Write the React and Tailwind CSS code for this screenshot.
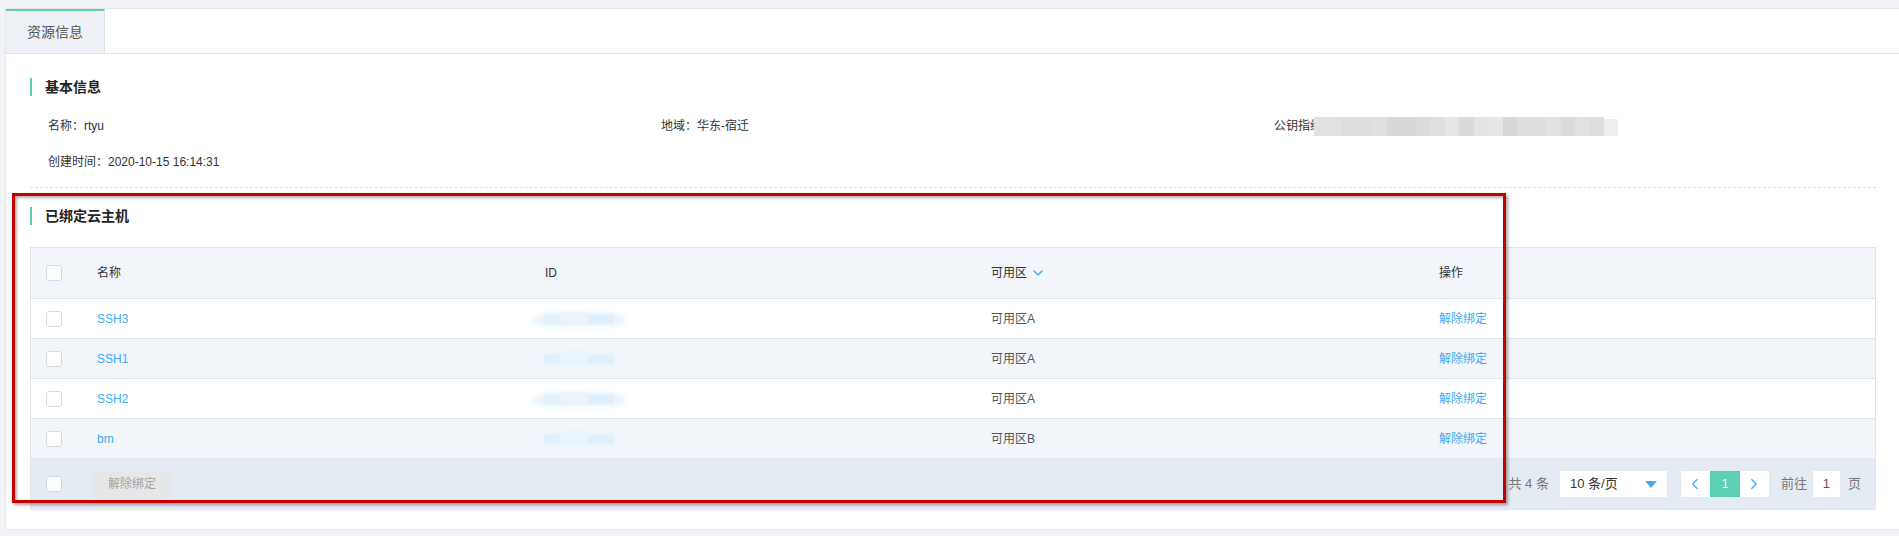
import { ChevronDown, ChevronLeft, ChevronRight } from "lucide-react";

const font = "font-['Liberation_Sans','Noto_Sans_CJK_SC',sans-serif]";

const rows = [
  { name: "SSH3", zone: "可用区A" },
  { name: "SSH1", zone: "可用区A" },
  { name: "SSH2", zone: "可用区A" },
  { name: "bm", zone: "可用区B" },
];

const mosaic = [
  "#e3e1df", "#e1e1e2", "#dcdddf", "#dedede", "#e0e0e0", "#dad8d7", "#d8d6d6",
  "#dcdcdc", "#e0dfde", "#e5e5e5", "#dadada", "#e2e3e3", "#e6e6e4", "#d9d8d6",
  "#dcdde0", "#dfdedc", "#e3e2e0", "#dbdbdb", "#e1e1e1", "#dedddb",
];

function Checkbox() {
  return (
    <span className="block h-[16px] w-[16px] rounded-[3px] border border-[#d4d9e2] bg-white" />
  );
}

function SectionTitle({ children, className = "" }) {
  return (
    <div className={"flex h-[20px] items-center " + className}>
      <span className="h-[18px] w-[2px] bg-[#5ccfb2]" />
      <span className="ml-[13px] text-[14px] font-bold text-[#222]">{children}</span>
    </div>
  );
}

function BlurId() {
  // masked id, just soft blue smudges
  return (
    <div className="relative h-[20px] w-[95px]">
      <div className="absolute left-[-6px] top-[4px] h-[14px] w-[92px] rounded-full bg-[#eef6fd] blur-[2px]" />
      <div className="absolute left-[5px] top-[5px] h-[10px] w-[70px] bg-[#dff0fc] blur-[1px]" />
      <div className="absolute left-[20px] top-[3px] h-[12px] w-[30px] rounded-full bg-[#e9f4fd] blur-[1px]" />
    </div>
  );
}

export default function App() {
  return (
    <div className={"relative h-[536px] w-[1899px] overflow-hidden bg-[#f0f2f5] pl-[5px] pt-[8px] " + font}>
      <div className="flex h-[522px] flex-col border-y border-l border-[#e4e7ed] bg-white">
        {/* tabs */}
        <div className="flex h-[45px] border-b border-[#dfe4ed]">
          <div className="flex w-[99px] items-center border-r border-t-2 border-r-[#dde3ea] border-t-[#5ccfb2] bg-[#eef2f6] pl-[21px] text-[14px] text-[#555]">
            资源信息
          </div>
        </div>

        <div className="pl-[24px] pr-[23px]">
          <SectionTitle className="mt-[23px]">基本信息</SectionTitle>

          <div className="mt-[11px] grid grid-cols-[613px_613px_1fr] pl-[18px] text-[12px] text-[#333]">
            <div className="flex h-[36px] items-center">名称：rtyu</div>
            <div className="flex h-[36px] items-center">地域：华东-宿迁</div>
            <div className="flex h-[36px] items-center">
              <span>公钥指纹</span>
              <div className="relative -ml-[8px] flex h-[19px]">
                {mosaic.map((c, i) => (
                  <span key={i} className="h-[19px] w-[14.5px]" style={{ background: c }} />
                ))}
                <span className="mt-[2px] h-[17px] w-[14px] bg-[#eceef0]" />
              </div>
            </div>
            <div className="flex h-[36px] items-center">创建时间：2020-10-15 16:14:31</div>
          </div>

          <div className="mt-[7px] border-t border-dashed border-[#dcdfe6]" />

          <SectionTitle className="mt-[18px]">已绑定云主机</SectionTitle>

          {/* table */}
          <div className="mt-[21px] border border-[#dfe4ed] text-[12px]">
            <div className="grid h-[51px] grid-cols-[66px_448px_446px_448px_1fr] items-center border-b border-[#dfe4ed] bg-[#f2f5fa] text-[#333]">
              <div className="pl-[15px]"><Checkbox /></div>
              <div>名称</div>
              <div>ID</div>
              <div className="flex items-center gap-[3px]">
                可用区
                <ChevronDown size={16} strokeWidth={2} className="text-[#3fa9f5]" />
              </div>
              <div>操作</div>
            </div>

            {rows.map((r, i) => (
              <div
                key={r.name}
                className={
                  "grid h-[40px] grid-cols-[66px_448px_446px_448px_1fr] items-center border-b border-[#dfe4ed] " +
                  (i % 2 === 1 ? "bg-[#f2f5fa]" : "bg-white")
                }
              >
                <div className="pl-[15px]"><Checkbox /></div>
                <div className="text-[#3fa9f5]">{r.name}</div>
                <div className="-ml-[6px]"><BlurId /></div>
                <div className="text-[#555]">{r.zone}</div>
                <div className="text-[#3fa9f5]">解除绑定</div>
              </div>
            ))}

            {/* footer */}
            <div className="flex h-[50px] items-center bg-[#e4ebf3] pl-[15px] pr-[14px]">
              <Checkbox />
              <button className="ml-[31px] h-[27px] w-[78px] rounded-[2px] bg-[#e6e7e9] text-[12px] text-[#a3a3a3]">
                解除绑定
              </button>
              <div className="ml-auto flex items-center text-[13px] text-[#777]">
                <span className="mr-[10px]">共 4 条</span>
                <div className="flex h-[28px] w-[109px] items-center justify-between rounded-[2px] border border-[#e4e7ed] bg-white pl-[10px] pr-[10px] text-[#333]">
                  <span>10 条/页</span>
                  <svg width="12" height="7" viewBox="0 0 12 7">
                    <path d="M0 0h12L6 7z" fill="#3fa9f5" />
                  </svg>
                </div>
                <div className="ml-[12px] flex h-[28px] border border-[#e4e7ed] bg-white">
                  <span className="flex w-[29px] items-center justify-center text-[#3fa9f5]">
                    <ChevronLeft size={18} strokeWidth={1.6} />
                  </span>
                  <span className="flex w-[30px] items-center justify-center bg-[#5dd0b3] text-[12px] text-white">1</span>
                  <span className="flex w-[29px] items-center justify-center text-[#3fa9f5]">
                    <ChevronRight size={18} strokeWidth={1.6} />
                  </span>
                </div>
                <span className="ml-[11px]">前往</span>
                <div className="ml-[5px] flex h-[28px] w-[29px] items-center justify-center rounded-[2px] border border-[#e4e7ed] bg-white text-[#555]">
                  1
                </div>
                <span className="ml-[7px]">页</span>
              </div>
            </div>
          </div>
        </div>
      </div>

      {/* red annotation frame */}
      <div className="pointer-events-none absolute left-[12px] top-[193px] h-[310px] w-[1494px] border-[3px] border-[#c40000] shadow-[2px_2px_3px_rgba(0,0,0,0.35),inset_2px_2px_3px_rgba(0,0,0,0.3)]" />
    </div>
  );
}
